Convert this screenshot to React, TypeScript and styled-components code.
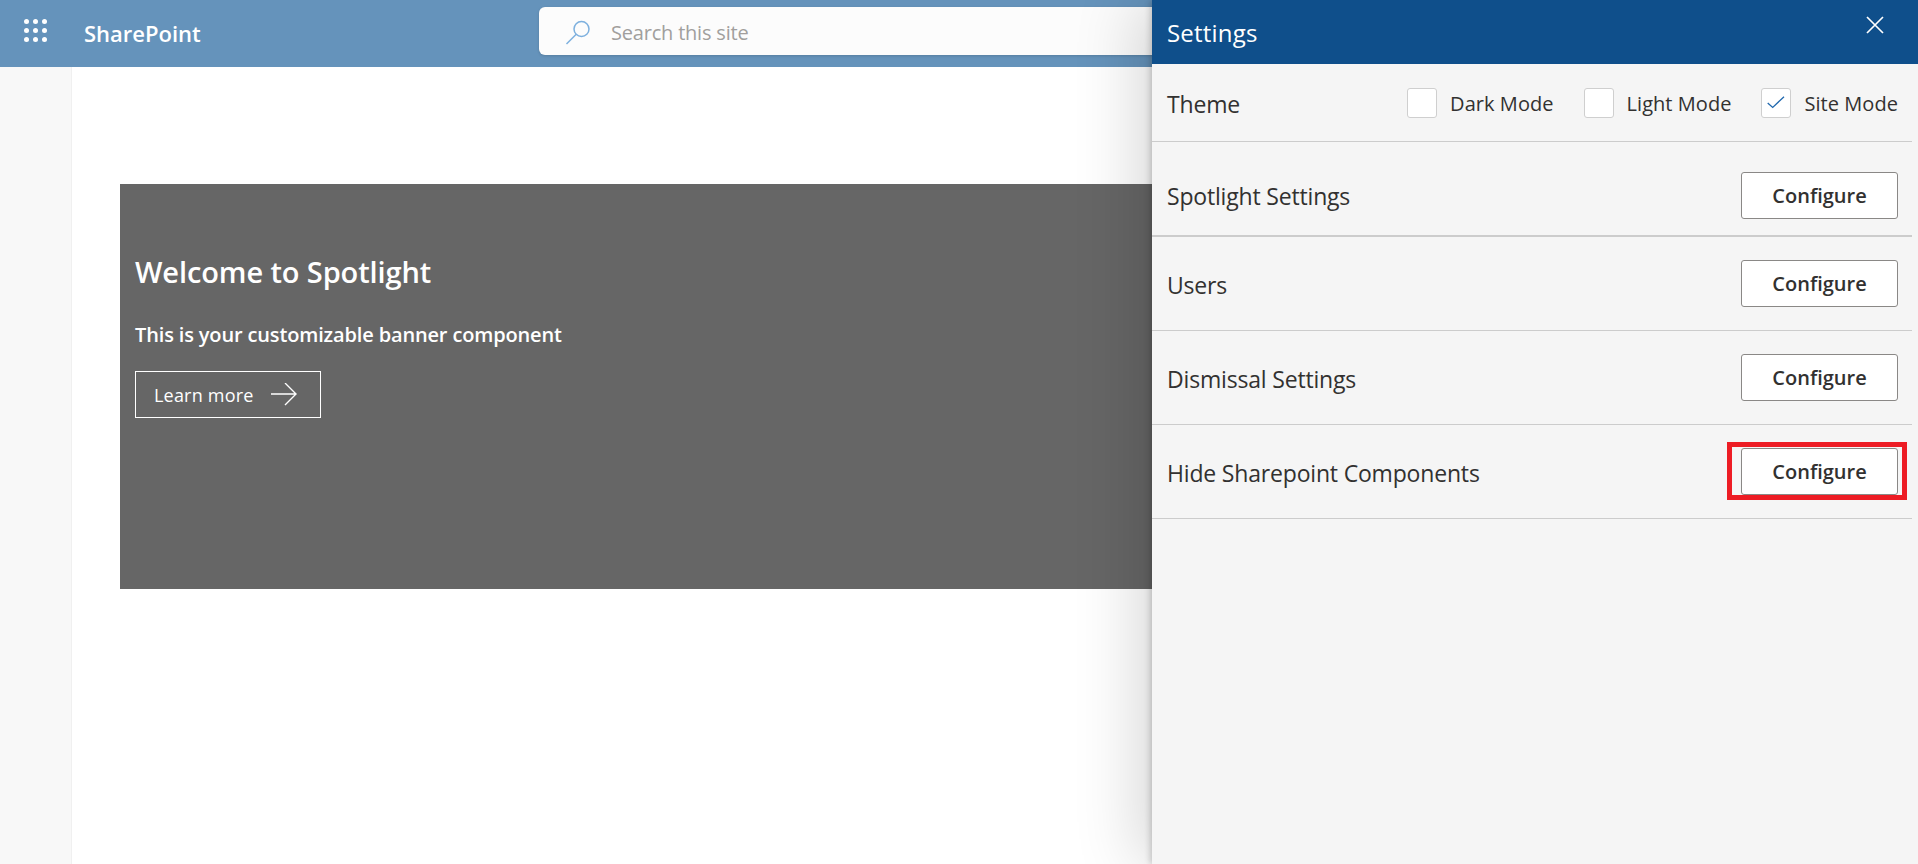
import React from 'react';
import styled, { createGlobalStyle } from 'styled-components';

const GlobalStyle = createGlobalStyle`
  html, body {
    margin: 0;
    padding: 0;
    height: 100%;
    overflow: hidden;
    background: #fff;
    font-family: "Open Sans", "Liberation Sans", sans-serif;
  }
`;

const rows = ['Spotlight Settings', 'Users', 'Dismissal Settings', 'Hide Sharepoint Components'];

const App: React.FC = () => (
  <>
    <GlobalStyle />
    <Page>
      <SuiteBar>
        <Waffle>
          <svg width="23" height="23" viewBox="0 0 23 23" fill="#fff">
            {[2.5, 11.5, 20.5].map((cy) =>
              [2.5, 11.5, 20.5].map((cx) => <circle key={`${cx}-${cy}`} cx={cx} cy={cy} r="2.5" />),
            )}
          </svg>
        </Waffle>
        <Brand>SharePoint</Brand>
        <SearchBox>
          <svg width="28" height="28" viewBox="0 0 28 28" fill="none" stroke="#7db0de" strokeWidth="1.5">
            <circle cx="17.5" cy="12" r="7.5" />
            <path d="M12.2 17.3 L2.5 27" />
          </svg>
          <SearchText>Search this site</SearchText>
        </SearchBox>
      </SuiteBar>
      <Body>
        <SideRail />
        <Content>
          <Banner>
            <BannerTitle>Welcome to Spotlight</BannerTitle>
            <BannerText>This is your customizable banner component</BannerText>
            <LearnMore>
              Learn more
              <svg width="26" height="24" viewBox="0 0 26 24" fill="none" stroke="#fff" strokeWidth="1.4">
                <path d="M0 11 H25 M14 0 L25 11 L14 22" />
              </svg>
            </LearnMore>
          </Banner>
        </Content>
      </Body>

      <Panel>
        <PanelHeader>
          <PanelTitle>Settings</PanelTitle>
          <CloseButton>
            <svg width="18" height="18" viewBox="0 0 18 18" stroke="#fff" strokeWidth="1.7" fill="none">
              <path d="M1 1 L17 17 M17 1 L1 17" />
            </svg>
          </CloseButton>
        </PanelHeader>
        <ThemeRow>
          <RowLabel>Theme</RowLabel>
          <ThemeOptions>
            <ThemeOption>
              <CheckBox />
              <OptionLabel>Dark Mode</OptionLabel>
            </ThemeOption>
            <ThemeOption>
              <CheckBox />
              <OptionLabel>Light Mode</OptionLabel>
            </ThemeOption>
            <ThemeOption>
              <CheckBox>
                <svg width="18" height="13" viewBox="0 0 18 13" fill="none" stroke="#2068ae" strokeWidth="1.3">
                  <path d="M0.7 7 L5.7 11.4 L17 0.7" />
                </svg>
              </CheckBox>
              <OptionLabel>Site Mode</OptionLabel>
            </ThemeOption>
          </ThemeOptions>
        </ThemeRow>
        {rows.map((label, i) => (
          <SettingRow key={label} $first={i === 0}>
            <RowLabel>{label}</RowLabel>
            <ButtonWrap $marked={i === rows.length - 1}>
              <ConfigureButton>Configure</ConfigureButton>
            </ButtonWrap>
          </SettingRow>
        ))}
      </Panel>
    </Page>
  </>
);

export default App;

const Page = styled.div`
  position: relative;
  width: 1918px;
  height: 864px;
  overflow: hidden;
  background: #fff;
`;

const SuiteBar = styled.header`
  display: flex;
  align-items: center;
  height: 67px;
  background: #6593bb;
`;

const Waffle = styled.div`
  display: flex;
  width: 84px;
  padding: 0 0 7px 24px;
  box-sizing: border-box;
`;

const Brand = styled.div`
  width: 455px;
  padding-bottom: 2px;
  font-size: 22px;
  font-weight: 600;
  color: #fff;
`;

const SearchBox = styled.div`
  display: flex;
  align-items: center;
  gap: 19px;
  width: 620px;
  height: 48px;
  margin-bottom: 5px;
  padding-left: 25px;
  box-sizing: border-box;
  border-radius: 6px;
  background: #fcfcfc;
  box-shadow: 0 1px 3px rgba(0, 0, 0, 0.15);
`;

const SearchText = styled.span`
  padding-top: 2px;
  font-size: 20px;
  color: #a19f9d;
  letter-spacing: -0.2px;
`;

const Body = styled.div`
  display: flex;
  height: 797px;
`;

const SideRail = styled.div`
  width: 71px;
  background: #f8f8f8;
  border-right: 1px solid #f0f0f0;
`;

const Content = styled.main`
  flex: 1;
  padding: 117px 0 0 48px;
`;

const Banner = styled.section`
  display: flex;
  flex-direction: column;
  align-items: flex-start;
  height: 405px;
  padding: 70px 0 0 15px;
  box-sizing: border-box;
  background: #666;
  color: #fff;
`;

const BannerTitle = styled.h1`
  margin: 0;
  font-size: 29px;
  line-height: 36px;
  font-weight: 600;
  letter-spacing: -0.1px;
`;

const BannerText = styled.p`
  margin: 32px 0 0;
  font-size: 20px;
  line-height: 26px;
  font-weight: 600;
  letter-spacing: -0.15px;
`;

const LearnMore = styled.div`
  display: flex;
  align-items: center;
  justify-content: space-between;
  width: 186px;
  height: 47px;
  margin-top: 23px;
  padding: 0 23px 0 18px;
  box-sizing: border-box;
  border: 1px solid #fff;
  font-size: 18px;
  letter-spacing: 0.2px;
`;

const Panel = styled.aside`
  position: absolute;
  top: 0;
  right: 0;
  bottom: 0;
  width: 766px;
  background: #f5f5f5;
  box-shadow: -2px 0 6px rgba(0, 0, 0, 0.18), -14px 0 60px rgba(0, 0, 0, 0.16);
`;

const PanelHeader = styled.div`
  display: flex;
  align-items: center;
  justify-content: space-between;
  height: 64px;
  padding: 0 34px 0 15px;
  box-sizing: border-box;
  background: #0f4f8b;
`;

const PanelTitle = styled.div`
  font-size: 24px;
  color: #fff;
  letter-spacing: 0.2px;
`;

const CloseButton = styled.div`
  display: flex;
  margin-top: -15px;
`;

const ThemeRow = styled.div`
  display: flex;
  align-items: center;
  justify-content: space-between;
  height: 77px;
  margin-right: 6px;
  padding: 0 14px 0 15px;
  border-bottom: 1px solid #ccc;
`;

const RowLabel = styled.span`
  padding-top: 2px;
  font-size: 23px;
  color: #323130;
  letter-spacing: -0.18px;
`;

const ThemeOptions = styled.div`
  display: flex;
  align-items: center;
  gap: 30px;
`;

const ThemeOption = styled.div`
  display: flex;
  align-items: center;
  gap: 13px;
`;

const CheckBox = styled.div`
  display: flex;
  align-items: center;
  justify-content: center;
  width: 30px;
  height: 30px;
  box-sizing: border-box;
  border: 1px solid #cfcfcf;
  border-radius: 3px;
  background: #fff;
`;

const OptionLabel = styled.span`
  padding-top: 1px;
  font-size: 20px;
  color: #323130;
  letter-spacing: 0.05px;
`;

const SettingRow = styled.div<{ $first: boolean }>`
  display: flex;
  align-items: center;
  justify-content: space-between;
  height: ${(props) => (props.$first ? '80px' : '93px')};
  margin-right: 6px;
  padding: ${(props) => (props.$first ? '13px' : '0')} 14px 0 15px;
  border-bottom: ${(props) => (props.$first ? '2px' : '1px')} solid #ccc;
`;

const ButtonWrap = styled.div<{ $marked: boolean }>`
  position: relative;
  display: flex;

  &::after {
    content: ${(props) => (props.$marked ? '""' : 'none')};
    position: absolute;
    inset: -6px -9px -5px -14px;
    border: 5px solid #ed1c24;
  }
`;

const ConfigureButton = styled.button`
  width: 157px;
  height: 47px;
  padding: 0;
  box-sizing: border-box;
  border: 1px solid #8a8886;
  border-radius: 3px;
  background: #fff;
  font-family: inherit;
  font-size: 20px;
  font-weight: 600;
  color: #323130;
`;
